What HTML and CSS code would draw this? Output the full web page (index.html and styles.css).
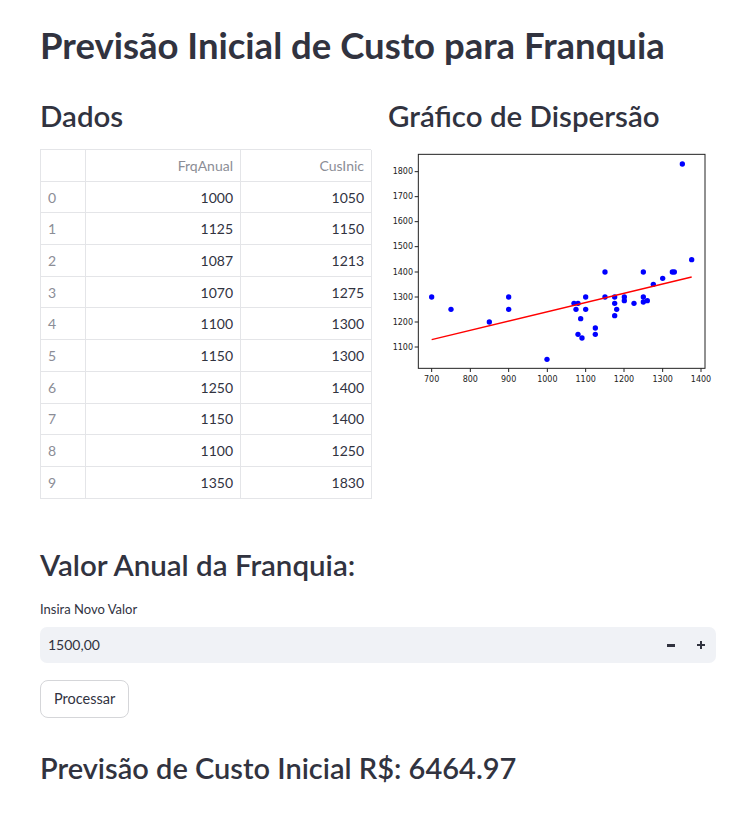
FILE: index.html
```html
<!DOCTYPE html>
<html lang="pt">
<head>
<meta charset="utf-8">
<link rel="stylesheet" href="styles.css">
</head>
<body>
<main class="main">
  <h1 class="title">Previsão Inicial de Custo para Franquia</h1>
  <div class="columns">
    <section class="col">
      <h2 class="h2">Dados</h2>
      <div class="table">
        <div class="cell head idx"></div><div class="cell head">FrqAnual</div><div class="cell head">CusInic</div>
        <div class="cell idx">0</div><div class="cell">1000</div><div class="cell">1050</div>
        <div class="cell idx">1</div><div class="cell">1125</div><div class="cell">1150</div>
        <div class="cell idx">2</div><div class="cell">1087</div><div class="cell">1213</div>
        <div class="cell idx">3</div><div class="cell">1070</div><div class="cell">1275</div>
        <div class="cell idx">4</div><div class="cell">1100</div><div class="cell">1300</div>
        <div class="cell idx">5</div><div class="cell">1150</div><div class="cell">1300</div>
        <div class="cell idx">6</div><div class="cell">1250</div><div class="cell">1400</div>
        <div class="cell idx">7</div><div class="cell">1150</div><div class="cell">1400</div>
        <div class="cell idx">8</div><div class="cell">1100</div><div class="cell">1250</div>
        <div class="cell idx">9</div><div class="cell">1350</div><div class="cell">1830</div>
      </div>
    </section>
    <section class="col">
      <h2 class="h2">Gráfico de Dispersão</h2>
      <svg class="chart" width="330" height="240" viewBox="9 12 990 720">
        <rect x="0" y="0" width="1100" height="800" fill="#fff"/>
        <g stroke="#222" stroke-width="3">
          <line x1="140" y1="670" x2="140" y2="681"/>
          <line x1="256" y1="670" x2="256" y2="681"/>
          <line x1="371" y1="670" x2="371" y2="681"/>
          <line x1="487" y1="670" x2="487" y2="681"/>
          <line x1="602" y1="670" x2="602" y2="681"/>
          <line x1="717" y1="670" x2="717" y2="681"/>
          <line x1="833" y1="670" x2="833" y2="681"/>
          <line x1="948" y1="670" x2="948" y2="681"/>
          <line x1="89" y1="80" x2="100" y2="80"/>
          <line x1="89" y1="155" x2="100" y2="155"/>
          <line x1="89" y1="230" x2="100" y2="230"/>
          <line x1="89" y1="305" x2="100" y2="305"/>
          <line x1="89" y1="381" x2="100" y2="381"/>
          <line x1="89" y1="456" x2="100" y2="456"/>
          <line x1="89" y1="531" x2="100" y2="531"/>
          <line x1="89" y1="606" x2="100" y2="606"/>
        </g>
        <g class="ticks" text-anchor="middle">
          <text x="140" y="710">700</text>
          <text x="256" y="710">800</text>
          <text x="371" y="710">900</text>
          <text x="487" y="710">1000</text>
          <text x="602" y="710">1100</text>
          <text x="717" y="710">1200</text>
          <text x="833" y="710">1300</text>
          <text x="948" y="710">1400</text>
        </g>
        <g class="ticks" text-anchor="end">
          <text x="84" y="88">1800</text>
          <text x="84" y="163">1700</text>
          <text x="84" y="238">1600</text>
          <text x="84" y="313">1500</text>
          <text x="84" y="389">1400</text>
          <text x="84" y="464">1300</text>
          <text x="84" y="539">1200</text>
          <text x="84" y="614">1100</text>
        </g>
        <g fill="#0000ff">
          <circle cx="140" cy="456" r="8"/>
          <circle cx="198" cy="493" r="8"/>
          <circle cx="313" cy="531" r="8"/>
          <circle cx="371" cy="456" r="8"/>
          <circle cx="371" cy="493" r="8"/>
          <circle cx="486" cy="643" r="8"/>
          <circle cx="567" cy="475" r="8"/>
          <circle cx="573" cy="493" r="8"/>
          <circle cx="579" cy="475" r="8"/>
          <circle cx="579" cy="568" r="8"/>
          <circle cx="587" cy="521" r="8"/>
          <circle cx="591" cy="579" r="8"/>
          <circle cx="602" cy="456" r="8"/>
          <circle cx="602" cy="493" r="8"/>
          <circle cx="631" cy="549" r="8"/>
          <circle cx="631" cy="568" r="8"/>
          <circle cx="660" cy="381" r="8"/>
          <circle cx="660" cy="456" r="8"/>
          <circle cx="689" cy="456" r="8"/>
          <circle cx="689" cy="475" r="8"/>
          <circle cx="689" cy="512" r="8"/>
          <circle cx="695" cy="493" r="8"/>
          <circle cx="718" cy="456" r="8"/>
          <circle cx="718" cy="467" r="8"/>
          <circle cx="747" cy="475" r="8"/>
          <circle cx="775" cy="381" r="8"/>
          <circle cx="775" cy="456" r="8"/>
          <circle cx="775" cy="471" r="8"/>
          <circle cx="787" cy="467" r="8"/>
          <circle cx="805" cy="418" r="8"/>
          <circle cx="833" cy="400" r="8"/>
          <circle cx="862" cy="381" r="8"/>
          <circle cx="868" cy="381" r="8"/>
          <circle cx="892" cy="57" r="8"/>
          <circle cx="920" cy="344" r="8"/>
        </g>
        <line x1="140" y1="584" x2="920" y2="396" stroke="#ff0000" stroke-width="4"/>
        <rect x="100" y="28" width="860" height="642" fill="none" stroke="#222" stroke-width="3"/>
      </svg>
    </section>
  </div>

  <h2 class="h2 section">Valor Anual da Franquia:</h2>
  <label class="label">Insira Novo Valor</label>
  <div class="number">
    <span class="value">1500,00</span>
    <span class="steps"><span class="step minus"></span><span class="step plus"></span></span>
  </div>
  <button class="btn">Processar</button>
  <h2 class="h2 result">Previsão de Custo Inicial R$: 6464.97</h2>
</main>
</body>
</html>
```

FILE: styles.css
```css
* { box-sizing: border-box; }
body {
  margin: 0;
  background: #fff;
  color: #31333f;
  font-family: "Lato", "Liberation Sans", sans-serif;
}
.main {
  padding: 24px 40px 0 40px;
  width: 756px;
}
.title {
  margin: 0;
  font-size: 36.5px;
  line-height: 42px;
  font-weight: 700;
}
.columns {
  display: grid;
  grid-template-columns: 332px 330px;
  column-gap: 16px;
  margin-top: 30px;
}
.h2 {
  margin: 0;
  font-size: 29.5px;
  line-height: 40px;
  font-weight: 600;
}
.col .h2 { margin-bottom: 13px; }
.table {
  display: grid;
  grid-template-columns: 45px 155px 131px;
  grid-template-rows: repeat(11, 31.7px);
  width: 331px;
  border-top: 1px solid #e4e5e8;
  border-left: 1px solid #e4e5e8;
}
.cell {
  border-right: 1px solid #e4e5e8;
  border-bottom: 1px solid #e4e5e8;
  font-size: 14px;
  display: flex;
  align-items: center;
  justify-content: flex-end;
  padding: 0 7px;
  color: #31333f;
}
.cell.idx { justify-content: flex-start; color: #8b8d96; }
.cell.head { color: #8b8d96; }
.chart { display: block; }
.ticks text {
  font-family: "DejaVu Sans", sans-serif;
  font-size: 24px;
  fill: #222;
}
.section { margin-top: 46px; }
.label {
  display: block;
  margin-top: 16px;
  font-size: 13px;
  line-height: 16px;
}
.number {
  margin-top: 10px;
  height: 36px;
  background: #f0f2f6;
  border-radius: 7px;
  display: flex;
  align-items: center;
  justify-content: space-between;
  padding: 0 0 0 8px;
}
.value { font-size: 14px; }
.steps { display: flex; }
.step {
  width: 30px;
  height: 30px;
  position: relative;
  display: block;
}
.step::before, .step::after {
  content: "";
  position: absolute;
  background: #31333f;
}
.minus::before { width: 8px; height: 3px; left: 11px; top: 14px; }
.plus::before { width: 8px; height: 2.5px; left: 11px; top: 14px; }
.plus::after { width: 2.5px; height: 8px; left: 13.75px; top: 11.25px; }
.btn {
  display: block;
  margin-top: 17px;
  height: 38px;
  padding: 0 13px;
  background: #fff;
  border: 1px solid #d5d6d9;
  border-radius: 8px;
  font-family: inherit;
  font-size: 14.5px;
  color: #31333f;
}
.result { margin-top: 30px; font-size: 29px; }
```
